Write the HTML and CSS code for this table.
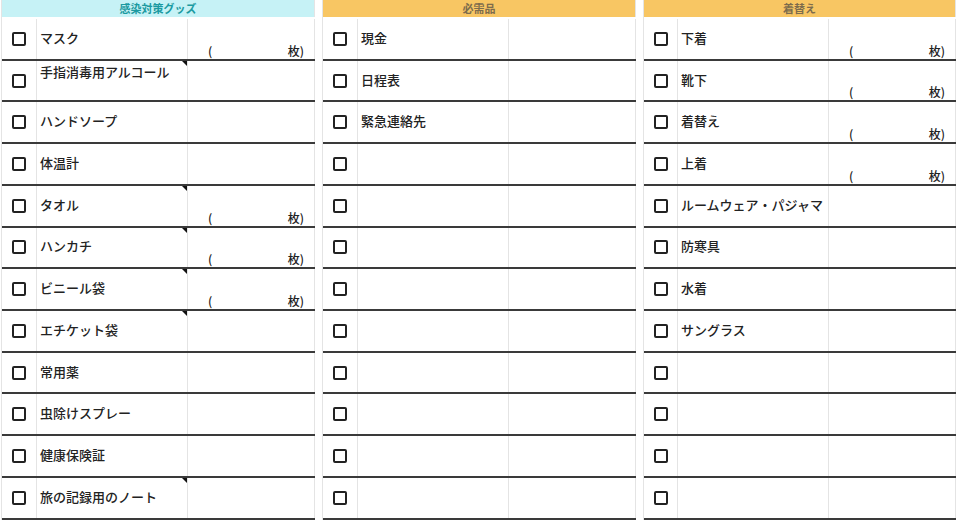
FILE: index.html
```
<!DOCTYPE html>
<html lang="ja">
<head>
<meta charset="utf-8">
<link rel="stylesheet" href="styles.css">
</head>
<body>
<div class="sheet">
  <section class="sec sec-a">
    <div class="hdr hdr-cyan">感染対策グッズ</div>
    <div class="row"><div class="c-box"><span class="box"></span></div><div class="c-name">マスク</div><div class="c-val"><span>(</span><span>枚)</span></div></div>
    <div class="row"><div class="c-box"><span class="box"></span></div><div class="c-name top note">手指消毒用アルコール</div><div class="c-val"></div></div>
    <div class="row"><div class="c-box"><span class="box"></span></div><div class="c-name">ハンドソープ</div><div class="c-val"></div></div>
    <div class="row"><div class="c-box"><span class="box"></span></div><div class="c-name">体温計</div><div class="c-val"></div></div>
    <div class="row"><div class="c-box"><span class="box"></span></div><div class="c-name note">タオル</div><div class="c-val"><span>(</span><span>枚)</span></div></div>
    <div class="row"><div class="c-box"><span class="box"></span></div><div class="c-name note">ハンカチ</div><div class="c-val"><span>(</span><span>枚)</span></div></div>
    <div class="row"><div class="c-box"><span class="box"></span></div><div class="c-name note">ビニール袋</div><div class="c-val"><span>(</span><span>枚)</span></div></div>
    <div class="row"><div class="c-box"><span class="box"></span></div><div class="c-name note">エチケット袋</div><div class="c-val"></div></div>
    <div class="row"><div class="c-box"><span class="box"></span></div><div class="c-name">常用薬</div><div class="c-val"></div></div>
    <div class="row"><div class="c-box"><span class="box"></span></div><div class="c-name">虫除けスプレー</div><div class="c-val"></div></div>
    <div class="row"><div class="c-box"><span class="box"></span></div><div class="c-name">健康保険証</div><div class="c-val"></div></div>
    <div class="row"><div class="c-box"><span class="box"></span></div><div class="c-name note">旅の記録用のノート</div><div class="c-val"></div></div>
  </section>
  <div class="gap"></div>
  <section class="sec sec-b">
    <div class="hdr hdr-orange">必需品</div>
    <div class="row"><div class="c-box"><span class="box"></span></div><div class="c-name">現金</div><div class="c-val"></div></div>
    <div class="row"><div class="c-box"><span class="box"></span></div><div class="c-name">日程表</div><div class="c-val"></div></div>
    <div class="row"><div class="c-box"><span class="box"></span></div><div class="c-name">緊急連絡先</div><div class="c-val"></div></div>
    <div class="row"><div class="c-box"><span class="box"></span></div><div class="c-name"></div><div class="c-val"></div></div>
    <div class="row"><div class="c-box"><span class="box"></span></div><div class="c-name"></div><div class="c-val"></div></div>
    <div class="row"><div class="c-box"><span class="box"></span></div><div class="c-name"></div><div class="c-val"></div></div>
    <div class="row"><div class="c-box"><span class="box"></span></div><div class="c-name"></div><div class="c-val"></div></div>
    <div class="row"><div class="c-box"><span class="box"></span></div><div class="c-name"></div><div class="c-val"></div></div>
    <div class="row"><div class="c-box"><span class="box"></span></div><div class="c-name"></div><div class="c-val"></div></div>
    <div class="row"><div class="c-box"><span class="box"></span></div><div class="c-name"></div><div class="c-val"></div></div>
    <div class="row"><div class="c-box"><span class="box"></span></div><div class="c-name"></div><div class="c-val"></div></div>
    <div class="row"><div class="c-box"><span class="box"></span></div><div class="c-name"></div><div class="c-val"></div></div>
  </section>
  <div class="gap"></div>
  <section class="sec sec-c">
    <div class="hdr hdr-orange">着替え</div>
    <div class="row"><div class="c-box"><span class="box"></span></div><div class="c-name">下着</div><div class="c-val"><span>(</span><span>枚)</span></div></div>
    <div class="row"><div class="c-box"><span class="box"></span></div><div class="c-name">靴下</div><div class="c-val"><span>(</span><span>枚)</span></div></div>
    <div class="row"><div class="c-box"><span class="box"></span></div><div class="c-name">着替え</div><div class="c-val"><span>(</span><span>枚)</span></div></div>
    <div class="row"><div class="c-box"><span class="box"></span></div><div class="c-name">上着</div><div class="c-val"><span>(</span><span>枚)</span></div></div>
    <div class="row"><div class="c-box"><span class="box"></span></div><div class="c-name">ルームウェア・パジャマ</div><div class="c-val"></div></div>
    <div class="row"><div class="c-box"><span class="box"></span></div><div class="c-name">防寒具</div><div class="c-val"></div></div>
    <div class="row"><div class="c-box"><span class="box"></span></div><div class="c-name">水着</div><div class="c-val"></div></div>
    <div class="row"><div class="c-box"><span class="box"></span></div><div class="c-name">サングラス</div><div class="c-val"></div></div>
    <div class="row"><div class="c-box"><span class="box"></span></div><div class="c-name"></div><div class="c-val"></div></div>
    <div class="row"><div class="c-box"><span class="box"></span></div><div class="c-name"></div><div class="c-val"></div></div>
    <div class="row"><div class="c-box"><span class="box"></span></div><div class="c-name"></div><div class="c-val"></div></div>
    <div class="row"><div class="c-box"><span class="box"></span></div><div class="c-name"></div><div class="c-val"></div></div>
  </section>
</div>
</body>
</html>
```
FILE: styles.css
```
* { box-sizing: border-box; }
html, body {
  margin: 0;
  padding: 0;
  background: #fff;
  overflow: hidden;
}
body {
  width: 960px;
  height: 520px;
  font-family: "Noto Sans CJK JP", "Noto Sans", sans-serif;
  color: #222;
}
.sheet {
  display: flex;
  margin-left: 1px;
  height: 520px;
  border-left: 1px solid #e4e4e4;
}
.sec {
  display: flex;
  flex-direction: column;
}
.sec-a { width: 313px; --cols: 35px 151px 127px; }
.sec-b { width: 313px; --cols: 35px 151px 127px; }
.sec-c { width: 312px; --cols: 34px 151px 127px; }
.gap {
  width: 8px;
  border-right: 1px solid #e4e4e4;
}
.hdr {
  height: 17px;
  margin-bottom: 2px;
  font-size: 11px;
  font-weight: bold;
  line-height: 17px;
  text-align: center;
  border-right: 1px solid #e4e4e4;
}
.hdr-cyan {
  background: #c6f2f6;
  color: #1b9aa1;
}
.hdr-orange {
  background: #f8c663;
  color: #7d6c4c;
}
.row {
  display: grid;
  grid-template-columns: var(--cols);
  height: 41.73px;
  border-bottom: 2px solid #3a3a3a;
}
.row > div {
  border-right: 1px solid #e4e4e4;
  display: flex;
  align-items: center;
}
.c-box {
  justify-content: center;
}
.box {
  width: 14px;
  height: 14px;
  border: 2px solid #222;
  border-radius: 2px;
}
.c-name {
  position: relative;
  padding-left: 3px;
  padding-bottom: 3px;
  font-size: 13px;
  font-weight: 500;
  white-space: nowrap;
}
.row > .c-name.top {
  align-items: flex-start;
  padding-top: 1px;
}
.note::after {
  content: "";
  position: absolute;
  top: 0;
  right: 0;
  width: 0;
  height: 0;
  border-top: 5px solid #111;
  border-left: 5px solid transparent;
}
.row > .c-val {
  align-items: flex-end;
  justify-content: space-between;
  padding: 0 10px 0 20px;
  font-size: 12px;
  font-weight: 500;
}
```
